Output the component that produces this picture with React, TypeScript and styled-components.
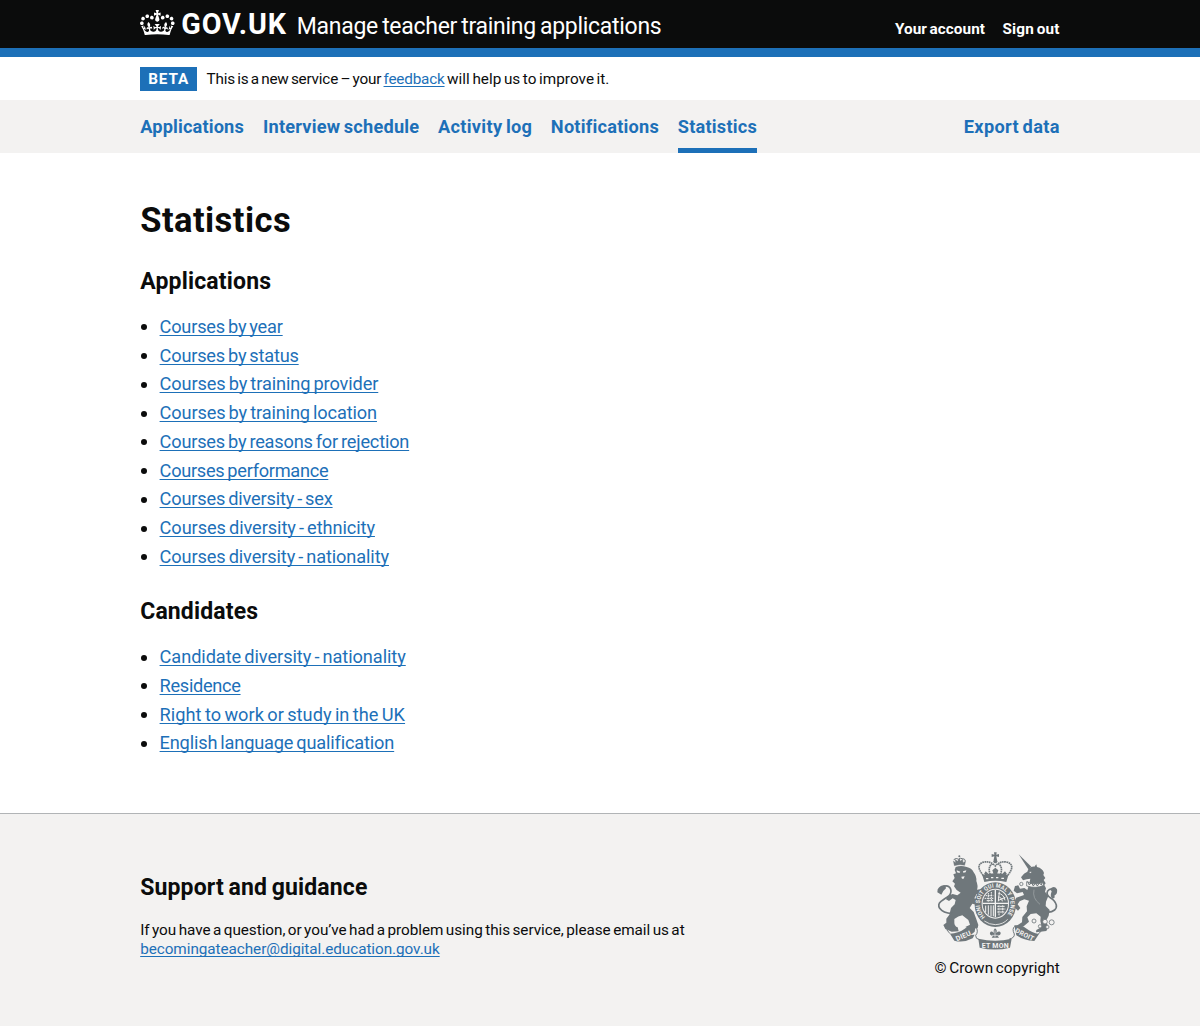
import React from "react";
import styled, { createGlobalStyle, css } from "styled-components";

const blue = "#1d70b8";
const ink = "#0b0c0c";
const pale = "#f3f2f1";
const crestGrey = "#6f777b";

const GlobalStyle = createGlobalStyle`
  *, *::before, *::after { box-sizing: border-box; }
  html { background: ${pale}; }
  body {
    margin: 0;
    background: #fff;
    color: ${ink};
    font-family: Roboto, "Liberation Sans", sans-serif;
    word-spacing: -0.08em;
    -webkit-font-smoothing: antialiased;
  }
`;

const Container = styled.div`
  width: 919.4px;
  margin-left: 140.2px;
`;

type Tracked = { $track?: number };
const tracking = css<Tracked>`
  letter-spacing: ${(p) => p.$track ?? 0}px;
`;

const Header = styled.header`
  background: ${ink};
  border-bottom: 9.5px solid ${blue};
  height: 57.3px;
`;

const HeaderRow = styled(Container)`
  display: flex;
  align-items: flex-start;
  height: 48px;
`;

const LogoLink = styled.a`
  display: flex;
  align-items: flex-start;
  color: #fff;
  text-decoration: none;
  padding-top: 10px;
`;

const Wordmark = styled.span`
  margin: -3px 0 0 6.5px;
  width: 115.5px;
  font-size: 28.7px;
  line-height: 34px;
  font-weight: 700;
  letter-spacing: 0.9px;
`;

const ServiceName = styled.a<Tracked>`
  padding-top: 11px;
  color: #fff;
  font-size: 23px;
  line-height: 32px;
  text-decoration: none;
  white-space: nowrap;
  ${tracking}
`;

const AccountNav = styled.nav`
  display: flex;
  gap: 17.5px;
  margin-left: auto;
  padding-top: 18.5px;
`;

const AccountLink = styled.a<Tracked>`
  color: #fff;
  font-size: 15.3px;
  line-height: 20px;
  font-weight: 700;
  text-decoration: none;
  ${tracking}
`;

const PhaseBanner = styled(Container)`
  display: flex;
  align-items: center;
  height: 43.2px;
`;

const Tag = styled.strong`
  width: 56.8px;
  height: 24px;
  margin-right: 9.5px;
  padding-left: 8px;
  background: ${blue};
  color: #fff;
  font-size: 15.3px;
  line-height: 25px;
  letter-spacing: 0.9px;
`;

const PhaseText = styled.span<Tracked>`
  font-size: 15.3px;
  line-height: 20px;
  white-space: pre;
  ${tracking}
`;

const Link = styled.a<Tracked>`
  color: ${blue};
  text-decoration: underline;
  text-decoration-thickness: 1px;
  text-decoration-skip-ink: none;
  text-underline-offset: 1.5px;
  white-space: nowrap;
  ${tracking}
`;

const NavBar = styled.nav`
  background: ${pale};
  height: 52.5px;
`;

const NavRow = styled(Container)`
  display: flex;
  height: 100%;
`;

const NavItem = styled.a<Tracked & { $width: number; $current?: boolean; $last?: boolean }>`
  width: ${(p) => p.$width}px;
  margin-right: ${(p) => (p.$last ? 0 : 19.2)}px;
  margin-left: ${(p) => (p.$last ? "auto" : 0)};
  padding-top: 14px;
  border-bottom: 5px solid ${(p) => (p.$current ? blue : "transparent")};
  color: ${blue};
  font-size: 18.2px;
  line-height: 25px;
  font-weight: 700;
  text-decoration: none;
  white-space: nowrap;
  ${tracking}
`;

const Main = styled.main`
  padding-top: 48px;
  height: 660px;
`;

const Title = styled.h1<Tracked>`
  margin: 0 0 28px;
  font-size: 34.5px;
  line-height: 38px;
  ${tracking}
`;

const Heading = styled.h2<Tracked>`
  margin: 0;
  font-size: 23px;
  line-height: 29px;
  ${tracking}
`;

const List = styled.ul`
  display: flex;
  flex-direction: column;
  gap: 4.72px;
  margin: 19px 0 28.4px;
  padding: 0;
  list-style: none;
`;

const Item = styled.li`
  display: flex;
  align-items: center;
  height: 24px;
  font-size: 18.2px;
  line-height: 24px;

  &::before {
    content: "";
    width: 6px;
    height: 6px;
    margin: 1px 12.6px 0 0.8px;
    border-radius: 50%;
    background: ${ink};
  }
`;

const Footer = styled.footer`
  height: 213px;
  border-top: 1px solid #b1b4b6;
  background: ${pale};
`;

const FooterRow = styled(Container)`
  display: flex;
  justify-content: space-between;
`;

const Support = styled.section`
  padding-top: 59px;
`;

const SupportText = styled.p<Tracked>`
  margin: 19px 0 0;
  font-size: 15.3px;
  line-height: 19.2px;
  white-space: nowrap;
  ${tracking}
`;

const Copyright = styled.a`
  display: flex;
  flex-direction: column;
  width: 125px;
  padding-top: 36px;
  color: ${ink};
  font-size: 15.3px;
  line-height: 20px;
  text-decoration: none;
  white-space: nowrap;
  letter-spacing: 0.06px;

  svg { display: block; margin-bottom: 8.5px; }
`;

const GovCrown = () => (
  <svg width="34.6" height="25.4" viewBox="0 0 132 97" fill="#fff" aria-hidden="true">
    <path d="M25 30.2c3.5 1.5 7.7-.2 9.1-3.7 1.5-3.6-.2-7.8-3.9-9.2-3.6-1.4-7.6.3-9.1 3.9-1.4 3.5.3 7.5 3.9 9zM9 39.5c3.6 1.5 7.8-.2 9.2-3.7 1.5-3.6-.2-7.8-3.9-9.1-3.6-1.5-7.6.2-9.1 3.8-1.4 3.5.3 7.5 3.8 9zM4.4 57.2c3.5 1.5 7.7-.2 9.1-3.8 1.5-3.6-.2-7.7-3.9-9.1-3.5-1.5-7.6.3-9.1 3.8-1.4 3.5.3 7.6 3.9 9.1zm38.3-21.4c3.5 1.5 7.7-.2 9.1-3.8 1.5-3.6-.2-7.7-3.9-9.1-3.6-1.5-7.6.3-9.1 3.8-1.3 3.6.4 7.7 3.9 9.1zm64.4-5.6c-3.6 1.5-7.8-.2-9.1-3.7-1.5-3.6.2-7.8 3.8-9.2 3.6-1.4 7.7.3 9.2 3.9 1.3 3.5-.4 7.5-3.9 9zm15.9 9.3c-3.6 1.5-7.7-.2-9.1-3.7-1.5-3.6.2-7.8 3.7-9.1 3.6-1.5 7.7.2 9.2 3.8 1.5 3.5-.3 7.5-3.8 9zm4.7 17.7c-3.6 1.5-7.8-.2-9.2-3.8-1.5-3.6.2-7.7 3.9-9.1 3.6-1.5 7.7.3 9.2 3.8 1.3 3.5-.4 7.6-3.9 9.1zM89.3 35.8c-3.6 1.5-7.8-.2-9.2-3.8-1.4-3.6.2-7.7 3.9-9.1 3.6-1.5 7.7.3 9.2 3.8 1.4 3.6-.3 7.7-3.9 9.1zM69.7 17.7l8.9 4.7V9.3l-8.9 2.8c-.2-.3-.5-.6-.9-.9L72.4 0H59.6l3.5 11.2c-.3.3-.6.5-.9.9l-8.8-2.8v13.1l8.8-4.7c.3.3.6.7.9.9l-5 15.4v.1c-.2.8-.4 1.6-.4 2.4 0 4.1 3.1 7.5 7 8.1h.2c.3 0 .7.1 1 .1.4 0 .7 0 1-.1h.2c4-.6 7.1-4.1 7.1-8.1 0-.8-.1-1.7-.4-2.4V34l-5.1-15.4c.4-.2.7-.6 1-.9zM66 92.8c16.9 0 32.8 1.1 47.1 3.2 4-16.9 8.9-26.7 14-33.5l-9.6-3.4c1 4.9 1.1 7.2 0 10.2-1.5-1.4-3-4.3-4.2-8.7L108.6 76c2.8-2 5-3.2 7.5-3.3-4.4 9.4-10 11.9-13.6 11.2-4.3-.8-6.3-4.6-5.6-7.9 1-4.7 5.7-5.9 8-.5 4.3-8.7-3-11.4-7.6-8.8 7.1-7.2 7.9-13.5 2.1-21.1-8 6.1-8.1 12.3-4.5 20.8-4.7-5.4-12.1-2.5-9.5 6.2 3.4-5.2 7.9-2 7.2 3.1-.6 4.3-6.4 7.8-13.5 7.2-10.3-.9-10.9-8-11.2-13.8 2.5-.5 7.1 1.8 11 7.3L80.2 60c-4.1 4.4-8 5.3-12.3 5.4 1.4-4.4 8-11.6 8-11.6H55.5s6.4 7.2 7.9 11.6c-4.2-.1-8-1-12.3-5.4l1.4 16.4c3.9-5.5 8.5-7.7 10.9-7.3-.3 5.8-.9 12.8-11.1 13.8-7.2.6-12.9-2.9-13.5-7.2-.7-5 3.8-8.3 7.1-3.1 2.7-8.7-4.6-11.6-9.4-6.2 3.7-8.5 3.6-14.7-4.6-20.8-5.8 7.6-5 13.9 2.2 21.1-4.7-2.6-11.9.1-7.7 8.8 2.3-5.5 7.1-4.2 8.1.5.7 3.3-1.3 7.1-5.7 7.9-3.5.7-9-1.8-13.5-11.2 2.5.1 4.7 1.3 7.5 3.3l-4.7-15.4c-1.2 4.4-2.7 7.2-4.3 8.7-1.1-3-.9-5.3 0-10.2l-9.5 3.4c5 6.9 9.9 16.7 14 33.5 14.8-2.1 30.8-3.2 47.7-3.2z" />
  </svg>
);

const Motto = styled.text<{ $size?: number; $start?: boolean }>`
  fill: ${pale};
  font: 700 ${(p) => p.$size ?? 21}px Roboto, "Liberation Sans", sans-serif;
  letter-spacing: 0.6px;
  word-spacing: 0;
  text-anchor: ${(p) => (p.$start ? "start" : "middle")};
`;

const RoyalArms = () => (
  <svg width="125" height="100" viewBox="0 0 375 300" fill={crestGrey} aria-hidden="true">
    {/* lion */}
    <path d="M55 33 58 47Q75 42 89 46L92 33 84 38 83 27 76 34 73 24 68 34 60 28 62 38Z" stroke={crestGrey} strokeWidth="1" />
    <circle cx="73" cy="19" r="3" />
    <path d="M57 30Q59 22 71 28Q75 23 83 26Q90 26 91 33" fill="none" stroke={crestGrey} strokeWidth="3" />
    <path d="M62 51 Q78 45 95 51 Q110 54 116 67 Q125 78 124 93 Q130 108 126 119 L139 117 Q150 112 152 124 L145 133 Q133 136 125 132 L118 145 Q130 148 137 158 L131 171 L122 177 L124 164 L112 161 L104 174 L116 186 L123 205 L130 225 L128 234 L106 238 L91 231 L105 224 L100 210 L82 196 Q70 198 58 207 L58 218 Q58 228 68 232 L71 244 L50 245 L31 237 L25 225 L34 218 L34 206 L43 194 L48 174 L59 163 L62 150 L53 145 L42 153 L33 148 L37 138 L53 132 L67 136 L77 128 L65 120 L57 109 L60 101 L52 94 L59 84 L55 73 L63 70 L59 60 Z" />
    <path d="M65 61 76 65 73 69 66 67ZM84 64 94 61 92 67 85 68ZM79 80 89 79 86 86 81 86Z" fill={pale} />
    <path d="M51 191Q24 189 14 175Q7 163 18 154Q31 145 41 139Q52 127 46 115Q40 104 25 109" fill="none" stroke={crestGrey} strokeWidth="5" />
    <path d="M31 106Q17 103 8 118L7 127 19 134Q23 123 33 115Z" />

    {/* unicorn */}
    <path d="M251 13 289 50 280 58Z" />
    <path d="M281 55 Q290 49 298 50 L304 43 L306 51 Q323 55 327 69 L325 75 L331 84 L326 90 L332 100 L328 105 L333 115 L330 125 L340 138 L333 155 L332 168 L344 180 L341 197 L333 213 L340 230 L334 243 L303 247 L304 240 L320 231 L316 213 L317 200 L304 190 L287 192 L277 202 L282 215 L266 229 L248 236 L245 227 L261 217 L262 201 L276 184 L275 169 L282 152 L268 148 L254 154 L248 163 L256 174 L249 182 L238 172 L238 156 L244 143 L267 135 L263 126 L246 130 L236 122 L240 108 L250 106 L255 116 L268 114 L277 120 L282 104 L286 86 L275 88 L264 91 L258 82 L267 71 L277 65 Z" />
    <path d="M282 66 289 65 288 70Z" fill={pale} />
    <path d="M275 95Q297 107 323 97L326 106Q304 117 275 108Z" fill={pale} stroke={crestGrey} strokeWidth="2.5" />
    <path d="M278 94 283 105 289 97 295 108 301 99 307 108 313 99 319 105 322 94" fill="none" stroke={crestGrey} strokeWidth="3" />
    <path d="M337 187Q367 184 364 165Q360 151 347 144Q332 134 338 123Q346 114 356 120" fill="none" stroke={crestGrey} strokeWidth="5" />
    <path d="M345 118Q357 104 366 118Q369 132 358 137 362 144 352 146 344 140 350 124Z" />
    <g fill={pale} stroke={crestGrey} strokeWidth="2.5">
      <circle cx="297" cy="213" r="6" /><circle cx="315" cy="229" r="5" />
      <circle cx="330" cy="215" r="7" /><circle cx="350" cy="217" r="7.5" />
      <circle cx="259" cy="102" r="5" /><circle cx="337" cy="231" r="5" />
    </g>
    <path d="M297 119Q291 145 315 163" fill="none" stroke="#a5aaac" strokeWidth="2" />

    {/* garter and quartered shield */}
    <ellipse cx="181" cy="164" rx="62" ry="67" />
    <ellipse cx="181" cy="161" rx="41" ry="45" fill={pale} />
    <ellipse cx="181" cy="161" rx="38" ry="42" />
    <path d="M181 120V202M143 160H219" stroke={pale} strokeWidth="4" />
    <g fill="none" stroke={pale} strokeWidth="3">
      <path d="M152 137H175M149 145H175M155 152H176M160 129V155M169 126V155" strokeDasharray="5 2" />
      <path d="M190 130Q206 132 210 151M189 141Q200 141 202 154M193 125 190 154M211 142 191 151" />
      <path d="M152 167V187M160 166V194M168 166V199M175 166V199" />
      <path d="M187 169H211M187 177H212M187 186H208M192 166V198M203 166V191" strokeDasharray="6 2" />
    </g>
    <path id="garter-motto" d="M151 201A46 50 0 1 1 214 197" fill="none" />
    <Motto $size={18} $start>
      <textPath href="#garter-motto" textLength="226" lengthAdjust="spacingAndGlyphs">HONI SOIT QUI MAL Y PENSE</textPath>
    </Motto>
    <path d="M148 213Q163 224 181 224Q205 223 218 208" fill="none" stroke={pale} strokeWidth="2.5" />

    {/* royal crown */}
    <path d="M142 76Q180 64 220 76L214 96Q181 88 148 96Z" />
    <path d="M153 86H160M168 83H175M183 83H190M199 85H207" stroke={pale} strokeWidth="4" />
    <path d="M145 76Q120 47 143 37Q165 31 181 48Q196 31 219 37Q242 47 218 76M166 75Q157 50 172 42M196 75Q205 50 190 42" fill="none" stroke={crestGrey} strokeWidth="5" strokeDasharray="5 1.6" />
    <path d="M177 7H185L184 14 192 12V21L184 19 186 30H176L178 19 170 21V12L178 14Z" />
    <circle cx="181" cy="34" r="6" />
    <path d="M181 53 190 61 186 73H176L172 61ZM152 64 160 71 154 78 147 72ZM210 64 216 72 209 78 202 71Z" />

    {/* motto scrolls */}
    <path d="M45 251Q70 250 88 237Q105 224 122 226L119 245 107 255 119 254 113 265Q85 280 58 272Z" />
    <path d="M122 229Q132 245 122 256Q120 266 135 270M223 267Q239 264 238 252Q230 237 239 229" fill="none" stroke={crestGrey} strokeWidth="3" />
    <path d="M130 266Q181 278 230 266L225 293Q180 304 134 293Z" />
    <path d="M238 226Q261 224 275 236 290 248 312 252L298 273Q267 272 244 256Z" />
    <path d="M310 252Q325 239 320 230M45 251 35 239" fill="none" stroke={crestGrey} strokeWidth="3" />
    <Motto transform="translate(88 264) rotate(-24)">DIEU</Motto>
    <Motto x="181" y="293">ET MON</Motto>
    <Motto $size={20} transform="translate(266 260) rotate(27)">DROIT</Motto>
    <path d="M180 235Q188 240 184 249Q193 241 197 248Q198 255 188 257L192 263H170L174 257Q163 256 165 248Q169 241 176 249Q173 241 180 235Z" />
    <path d="M171 256H190M180 241V262" stroke={pale} strokeWidth="2" />
  </svg>
);

type Entry = { label: string; track: number };

const applicationLinks: Entry[] = [
  { label: "Courses by year", track: -0.207 },
  { label: "Courses by status", track: -0.206 },
  { label: "Courses by training provider", track: -0.11 },
  { label: "Courses by training location", track: -0.13 },
  { label: "Courses by reasons for rejection", track: -0.2 },
  { label: "Courses performance", track: -0.284 },
  { label: "Courses diversity - sex", track: -0.18 },
  { label: "Courses diversity - ethnicity", track: -0.08 },
  { label: "Courses diversity - nationality", track: -0.12 },
];

const candidateLinks: Entry[] = [
  { label: "Candidate diversity - nationality", track: -0.07 },
  { label: "Residence", track: -0.31 },
  { label: "Right to work or study in the UK", track: 0.045 },
  { label: "English language qualification", track: -0.17 },
];

const navigation = [
  { label: "Applications", track: 0.142, width: 103.7 },
  { label: "Interview schedule", track: 0.2, width: 155.8 },
  { label: "Activity log", track: 0.29, width: 93.6 },
  { label: "Notifications", track: 0.22, width: 107.8 },
  { label: "Statistics", track: 0.2, width: 79.2, current: true },
  { label: "Export data", track: 0.33, width: 95.8, last: true },
];

const LinkList = ({ entries }: { entries: Entry[] }) => (
  <List>
    {entries.map((e) => (
      <Item key={e.label}><Link href="#" $track={e.track}>{e.label}</Link></Item>
    ))}
  </List>
);

export default function App() {
  return (
    <>
      <GlobalStyle />
      <Header>
        <HeaderRow>
          <LogoLink href="#"><GovCrown /><Wordmark>GOV.UK</Wordmark></LogoLink>
          <ServiceName href="#" $track={-0.285}>Manage teacher training applications</ServiceName>
          <AccountNav>
            <AccountLink href="#" $track={0.06}>Your account</AccountLink>
            <AccountLink href="#" $track={0.17}>Sign out</AccountLink>
          </AccountNav>
        </HeaderRow>
      </Header>
      <PhaseBanner>
        <Tag>BETA</Tag>
        <PhaseText $track={-0.2}>This is a new service – your </PhaseText>
        <PhaseText><Link href="#" $track={-0.209}>feedback</Link></PhaseText>
        <PhaseText $track={0.03}> will help us to improve it.</PhaseText>
      </PhaseBanner>
      <NavBar>
        <NavRow>
          {navigation.map((n) => (
            <NavItem key={n.label} href="#" $track={n.track} $width={n.width} $current={n.current} $last={n.last}>
              {n.label}
            </NavItem>
          ))}
        </NavRow>
      </NavBar>
      <Main>
        <Container>
          <Title $track={0.45}>Statistics</Title>
          <Heading $track={0.167}>Applications</Heading>
          <LinkList entries={applicationLinks} />
          <Heading $track={0.144}>Candidates</Heading>
          <LinkList entries={candidateLinks} />
        </Container>
      </Main>
      <Footer>
        <FooterRow>
          <Support>
            <Heading $track={0.15}>Support and guidance</Heading>
            <SupportText $track={-0.046}>
              If you have a question, or you’ve had a problem using this service, please email us at<br />
              <Link href="#" $track={-0.062}>becomingateacher@digital.education.gov.uk</Link>
            </SupportText>
          </Support>
          <Copyright href="#"><RoyalArms />© Crown copyright</Copyright>
        </FooterRow>
      </Footer>
    </>
  );
}
